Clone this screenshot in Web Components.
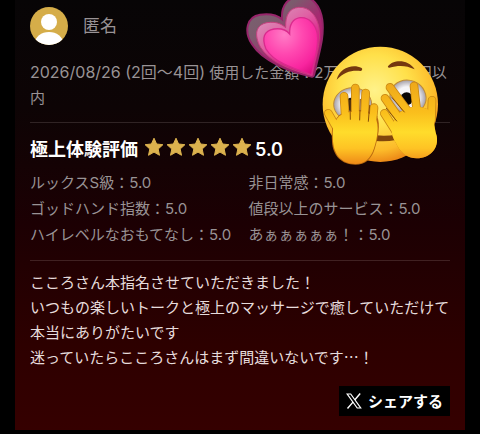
<!DOCTYPE html>
<html lang="ja">
<head>
<meta charset="utf-8">
<meta name="viewport" content="width=device-width, initial-scale=1">
<title>極上体験評価</title>
<style>
    body {
        margin: 0;
        background: #000000;
        color: #999395;
        font: 15px/25px Inter, "Noto Sans CJK JP", sans-serif;
    }
</style>
</head>
<body>
<review-card>
    <user-badge slot="user">匿名</user-badge>
    <visit-info slot="visit" date="2026/08/26 (2回〜4回)">使用した金額：2万5千円〜3万円以<wbr>内</visit-info>
    <rating-summary slot="rating" label="極上体験評価" score="5.0"></rating-summary>
    <rating-list slot="rating"></rating-list>
    <review-text slot="comment">こころさん本指名させていただきました！<br>いつもの楽しいトークと極上のマッサージで癒していただけて本当にありがたいです<br>迷っていたらこころさんはまず間違いないです…！</review-text>
    <share-button slot="share">シェアする</share-button>
    <heart-sticker slot="sticker"></heart-sticker>
    <peek-sticker slot="sticker"></peek-sticker>
</review-card>

<script>
class ReviewCard extends HTMLElement {
    constructor() {
        super();
        this.attachShadow({mode: "open"}).innerHTML = `
        <style>
        :host {
            display: block;
            position: relative;
            margin: 0 15px;
        }

        article {
            padding: 7px 15px 14px;
            background: linear-gradient(#070506 0%, #0d0405 25%, #1c0003 52%, #2d0000 80%, #350000 100%);
        }

        section {
            border-bottom: 1px solid rgba(255, 235, 235, 0.14);
        }

        .visit {
            padding: 15px 0 12px;
        }

        .rating {
            padding: 13px 0 12px;
        }

        .comment {
            border: 0;
            padding: 8px 0 17px;
        }

        footer {
            display: flex;
            justify-content: flex-end;
        }
        </style>

        <article>
            <header><slot name="user"></slot></header>
            <section class="visit"><slot name="visit"></slot></section>
            <section class="rating"><slot name="rating"></slot></section>
            <section class="comment"><slot name="comment"></slot></section>
            <footer><slot name="share"></slot></footer>
        </article>
        <slot name="sticker"></slot>
        `;
    }
}

class UserBadge extends HTMLElement {
    constructor() {
        super();
        this.attachShadow({mode: "open"}).innerHTML = `
        <style>
        :host {
            display: flex;
            align-items: center;
            gap: 15px;
            font-size: 17px;
        }

        svg {
            width: 38px;
            height: 38px;
        }
        </style>

        <svg viewBox="0 0 38 38" aria-hidden="true">
            <clipPath id="round"><circle cx="19" cy="19" r="19"/></clipPath>
            <g clip-path="url(#round)">
                <rect width="38" height="38" fill="#d5ad49"/>
                <circle cx="19" cy="15" r="8" fill="#fff"/>
                <ellipse cx="19" cy="36" rx="14" ry="11" fill="#fff"/>
            </g>
        </svg>
        <span><slot></slot></span>
        `;
    }
}

class VisitInfo extends HTMLElement {
    connectedCallback() {
        this.attachShadow({mode: "open"}).innerHTML = `
        <style>
        :host {
            display: block;
        }

        .date {
            font-size: 16px;
        }
        </style>

        <span class="date">${this.getAttribute("date")}</span>
        <slot></slot>
        `;
    }
}

class RatingSummary extends HTMLElement {
    connectedCallback() {
        const star = `<svg viewBox="0 0 20 20"><path d="M10 1.2 12.6 7l6.3.7-4.7 4.3 1.3 6.3L10 15.100l-5.500 3.200 1.300-6.300L1.100 7.700 7.400 7z" fill="#dcb24e" stroke="#dcb24e" stroke-width="1" stroke-linejoin="round"/></svg>`;
        this.attachShadow({mode: "open"}).innerHTML = `
        <style>
        :host {
            display: flex;
            align-items: center;
            gap: 6px;
            color: #ffffff;
            font-size: 18px;
            font-weight: 600;
            line-height: 28px;
        }

        .stars {
            display: flex;
            gap: 2px;
            padding-bottom: 6px;
        }

        .score {
            display: flex;
            align-items: center;
            gap: 3px;
        }

        svg {
            width: 20px;
            height: 20px;
        }
        </style>

        <span>${this.getAttribute("label")}</span>
        <span class="score">
            <span class="stars" aria-hidden="true">${star.repeat(5)}</span>
            <span>${this.getAttribute("score")}</span>
        </span>
        `;
    }
}

class RatingList extends HTMLElement {
    connectedCallback() {
        const ratings = [
            ["ルックスS級", "5.0"],
            ["非日常感", "5.0"],
            ["ゴッドハンド指数", "5.0"],
            ["値段以上のサービス", "5.0"],
            ["ハイレベルなおもてなし", "5.0"],
            ["あぁぁぁぁぁ！", "5.0"]
        ];
        this.attachShadow({mode: "open"}).innerHTML = `
        <style>
        :host {
            display: block;
            margin-top: 6px;
        }

        ul {
            display: grid;
            grid-template-columns: 52% 48%;
            margin: 0;
            padding: 0;
            list-style: none;
            line-height: 26px;
            white-space: nowrap;
        }
        </style>

        <ul>${ratings.map(([name, score]) => `<li>${name}：${score}</li>`).join("")}</ul>
        `;
    }
}

class ReviewText extends HTMLElement {
    constructor() {
        super();
        this.attachShadow({mode: "open"}).innerHTML = `
        <style>
        :host {
            display: block;
            color: #e6dcdc;
            font-family: "Noto Sans CJK JP", sans-serif;
        }

        p {
            margin: 0;
        }
        </style>

        <p><slot></slot></p>
        `;
    }
}

class ShareButton extends HTMLElement {
    constructor() {
        super();
        this.attachShadow({mode: "open"}).innerHTML = `
        <style>
        :host {
            display: block;
        }

        button {
            display: flex;
            align-items: center;
            gap: 6px;
            height: 30px;
            padding: 0 7px;
            border: 0;
            background: #000000;
            color: #ffffff;
            font: inherit;
            font-weight: bold;
            cursor: pointer;
        }

        svg {
            width: 16px;
            height: 16px;
        }
        </style>

        <button type="button">
            <svg viewBox="0 0 16 16" fill="none" stroke="#fff" aria-hidden="true">
                <path d="M1.200 1h3.500l10 14h-3.500z" stroke-width="1.200"/>
                <path d="M14.200.5 8.900 6.800M7.200 8.900 1.500 15.500" stroke-width="1.400"/>
            </svg>
            <span><slot></slot></span>
        </button>
        `;
    }
}

class HeartSticker extends HTMLElement {
    constructor() {
        super();
        this.attachShadow({mode: "open"}).innerHTML = `
        <style>
        :host {
            position: absolute;
            top: 0;
            left: 227px;
            width: 86px;
            height: 80px;
            pointer-events: none;
        }

        svg {
            display: block;
            width: 100%;
            height: 100%;
        }
        </style>

        <svg viewBox="0 0 258 240" aria-hidden="true">
            <defs>
                <linearGradient id="rim" x1="0" y1="0" x2=".8" y2="1">
                    <stop offset="0" stop-color="#75666f"/>
                    <stop offset=".35" stop-color="#7c5a6d"/>
                    <stop offset=".6" stop-color="#a52a70"/>
                    <stop offset="1" stop-color="#c80d74"/>
                </linearGradient>
                <linearGradient id="middle" x1=".1" y1="0" x2=".8" y2="1">
                    <stop offset="0" stop-color="#d79fbf"/>
                    <stop offset=".4" stop-color="#df62a4"/>
                    <stop offset=".7" stop-color="#dc208c"/>
                    <stop offset="1" stop-color="#cf0878"/>
                </linearGradient>
                <radialGradient id="core" cx=".38" cy=".3" r=".85">
                    <stop offset="0" stop-color="#ff7cc6"/>
                    <stop offset=".4" stop-color="#ff48b0"/>
                    <stop offset=".75" stop-color="#f8259f"/>
                    <stop offset="1" stop-color="#d90c7e"/>
                </radialGradient>
            </defs>
            <path d="M210 230C145 216 64 186 30 133 5 94 14 50 54 44c29-4 50 0 66 14-3-42 18-66 55-69 36-1 60 28 66 71 7 56-13 105-23 158-2 10-4 13-8 12z" fill="url(#rim)" stroke="#97256a" stroke-width="6"/>
            <path d="M210 227C150 210 84 188 55 141 35 103 42 74 75 68c27-4 42 3 56 15-1-39 11-58 39-61 33-2 55 26 61 62 7 47-13 92-21 143z" fill="url(#middle)" stroke="#c6407f" stroke-width="3"/>
            <path d="M209 224C156 206 96 188 72 147 58 114 66 92 96 87c22-3 37 3 47 15-1-28 7-45 31-49 27-3 47 21 52 49 6 43-11 80-17 122z" fill="url(#core)" stroke="#d92b8d" stroke-width="4"/>
        </svg>
        `;
    }
}

class PeekSticker extends HTMLElement {
    constructor() {
        super();
        const left = `
            <path d="M64 222c28-18 85-22 108 7 12 19 7 58-4 90-10 31-28 47-56 47-40 0-64-27-67-68-2-35-1-55 19-76z" stroke-width="0"/>
            <path d="M31 214 60 265M78 163 83 245M112 138 112 245M143 153 138 245M168 197 161 270"/>`;
        const right = `
            <path d="M226 247c5-45 65-65 103-45 22 17 17 50 27 80 7 36-18 66-60 67-29 0-48-16-62-45-14-24-16-38-8-57z" stroke-width="0"/>
            <path d="M199 214 244 285M201 169 255 245M216 136 275 215M288 132 298 220M342 175 340 235"/>`;
        this.attachShadow({mode: "open"}).innerHTML = `
        <style>
        :host {
            position: absolute;
            top: 42px;
            left: 303px;
            width: 124px;
            height: 124px;
            pointer-events: none;
        }

        svg {
            display: block;
            width: 100%;
            height: 100%;
        }

        .hand, .edge {
            stroke-linecap: round;
        }

        .hand {
            fill: url(#hand);
            stroke: url(#hand);
            stroke-width: 21px;
        }

        .edge {
            fill: #c47a10;
            stroke: #c98712;
            stroke-width: 26px;
        }
        </style>

        <svg viewBox="0 0 372 372" aria-hidden="true">
            <defs>
                <radialGradient id="face" cx=".45" cy=".38" r=".62">
                    <stop offset="0" stop-color="#fff28a"/>
                    <stop offset=".5" stop-color="#ffe04a"/>
                    <stop offset=".84" stop-color="#fcbb2a"/>
                    <stop offset="1" stop-color="#ed8b18"/>
                </radialGradient>
                <linearGradient id="hand" gradientUnits="userSpaceOnUse" x1="0" y1="125" x2="0" y2="368">
                    <stop offset="0" stop-color="#eea91a"/>
                    <stop offset=".35" stop-color="#fabe1c"/>
                    <stop offset=".6" stop-color="#ffdc2b"/>
                    <stop offset=".8" stop-color="#fec324"/>
                    <stop offset="1" stop-color="#ee8817"/>
                </linearGradient>
                <radialGradient id="eye">
                    <stop offset=".6" stop-color="#f5f5f8"/>
                    <stop offset="1" stop-color="#a29da5"/>
                </radialGradient>
            </defs>
            <circle cx="187" cy="187" r="173" fill="url(#face)"/>
            <path d="M56 113c8-32 45-49 75-35 3 2 2 8-3 9-26-3-49 2-72 26zM210 73c14-20 60-23 80 9-25-12-47-13-76-5-4 0-5-2-4-4z" fill="#74380f"/>
            <ellipse cx="104" cy="187" rx="57" ry="50" fill="url(#eye)" stroke="#c08b35" stroke-width="3"/>
            <ellipse cx="270" cy="165" rx="55" ry="50" transform="rotate(22 270 165)" fill="url(#eye)" stroke="#c08b35" stroke-width="3"/>
            <ellipse cx="97" cy="187" rx="13" ry="20" fill="#171313"/>
            <circle cx="266" cy="170" r="19" fill="#080606"/>
            <path d="M174 280q32 3 60-2v16q-28 6-60 3z" fill="#81470c"/>
            <g class="edge">${left}</g>
            <path d="M64 219c28-18 89-22 113 4 12 25 3 65-7 98-10 31-28 47-58 47-42 0-67-27-70-68-2-35-1-58 22-81z" fill="#b8690e"/>
            <g class="hand">${left}</g>
            <g class="edge">${right}</g>
            <g class="hand">${right}</g>
            <g fill="none" stroke="#895009" stroke-width="3" stroke-linecap="round">
                <path d="M96 175 97 232M127 172 125 234M155 190 151 238"/>
                <path d="M205 199 236 237M222 167 259 210"/>
            </g>
        </svg>
        `;
    }
}

customElements.define("review-card", ReviewCard);
customElements.define("user-badge", UserBadge);
customElements.define("visit-info", VisitInfo);
customElements.define("rating-summary", RatingSummary);
customElements.define("rating-list", RatingList);
customElements.define("review-text", ReviewText);
customElements.define("share-button", ShareButton);
customElements.define("heart-sticker", HeartSticker);
customElements.define("peek-sticker", PeekSticker);
</script>
</body>
</html>
